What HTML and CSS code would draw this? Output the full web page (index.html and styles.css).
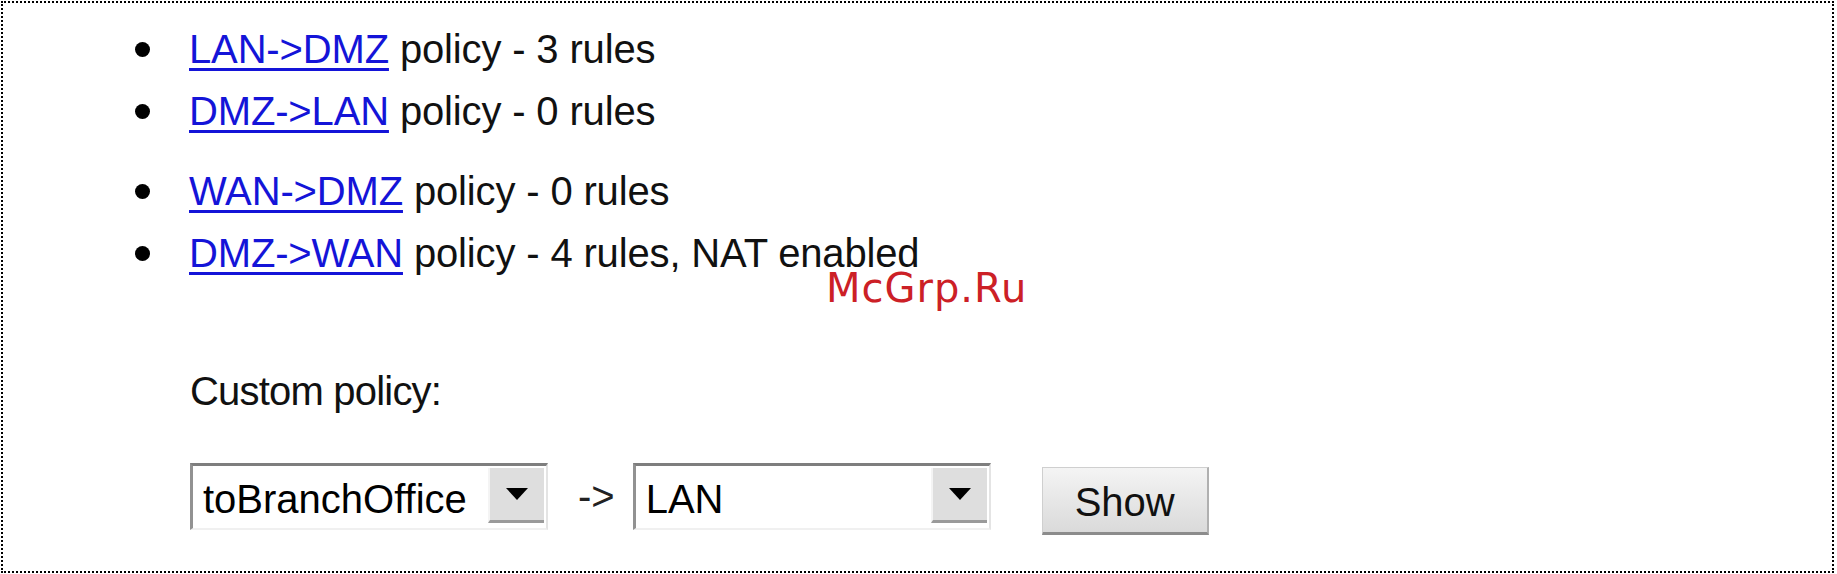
FILE: index.html
```html
<!DOCTYPE html>
<html>
<head>
<meta charset="utf-8">
<link rel="stylesheet" href="styles.css">
</head>
<body>
<div class="frame">
  <ul class="policies">
    <li class="item"><span class="dot"></span><a href="#" class="link">LAN-&gt;DMZ</a>&nbsp;policy - 3 rules</li>
    <li class="item"><span class="dot"></span><a href="#" class="link">DMZ-&gt;LAN</a>&nbsp;policy - 0 rules</li>
    <li class="item item-gap"><span class="dot"></span><a href="#" class="link">WAN-&gt;DMZ</a>&nbsp;policy - 0 rules</li>
    <li class="item"><span class="dot"></span><a href="#" class="link">DMZ-&gt;WAN</a>&nbsp;policy - 4 rules, NAT enabled</li>
  </ul>
  <div class="custom">
    <p class="custom-label">Custom policy:</p>
    <div class="controls">
      <div class="combo">
        <span class="combo-text">toBranchOffice</span>
        <span class="combo-btn"><span class="tri"></span></span>
      </div>
      <span class="arrow">-&gt;</span>
      <div class="combo">
        <span class="combo-text">LAN</span>
        <span class="combo-btn"><span class="tri"></span></span>
      </div>
      <button class="show">Show</button>
    </div>
  </div>
  <div class="watermark">McGrp.Ru</div>
</div>
</body>
</html>
```
FILE: styles.css
```css
html, body {
  margin: 0;
  padding: 0;
  background: #fff;
}
body {
  padding: 1px;
  font-family: "Liberation Sans", Arial, sans-serif;
  font-size: 40px;
  color: #111;
}
.frame {
  position: relative;
  box-sizing: border-box;
  width: 1833px;
  height: 572px;
  border: 2px dotted #000;
  padding: 15px 0 0 0;
}
.policies {
  list-style: none;
  margin: 0;
  padding: 0 0 0 132px;
}
.item {
  display: flex;
  align-items: center;
  height: 62px;
  line-height: 62px;
  white-space: pre;
  letter-spacing: -0.15px;
}
.item-gap {
  margin-top: 18px;
}
.dot {
  width: 15px;
  height: 15px;
  border-radius: 50%;
  background: #000;
  margin-right: 39px;
  flex: none;
}
.link {
  color: #1414d8;
  text-decoration: underline;
  text-decoration-thickness: 3px;
  text-underline-offset: 5px;
}
.custom {
  padding-left: 187px;
  margin-top: 76px;
}
.custom-label {
  margin: 0;
  height: 62px;
  line-height: 62px;
  letter-spacing: -0.8px;
}
.controls {
  display: flex;
  align-items: center;
  margin-top: 36px;
}
.combo {
  box-sizing: border-box;
  display: flex;
  width: 358px;
  height: 67px;
  background: #fff;
  border-top: 3px solid #7e7e7e;
  border-left: 3px solid #929292;
  border-right: 2px solid #e4e4e4;
  border-bottom: 2px solid #f0f0f0;
}
.combo-text {
  flex: 1;
  padding-left: 10px;
  padding-top: 4px;
  line-height: 58px;
  color: #000;
}
.combo-btn {
  box-sizing: border-box;
  width: 56px;
  margin: 2px 2px 5px 0;
  background: #dedede;
  border-left: 2px solid #f4f4f4;
  border-bottom: 3px solid #9a9a9a;
  display: flex;
  align-items: center;
  justify-content: center;
}
.tri {
  width: 0;
  height: 0;
  border-left: 11px solid transparent;
  border-right: 11px solid transparent;
  border-top: 12px solid #000;
}
.arrow {
  margin: 0 18px 0 30px;
  color: #222;
}
.show {
  box-sizing: border-box;
  margin-left: 51px;
  width: 167px;
  height: 68px;
  font: inherit;
  color: #111;
  background: linear-gradient(#f4f4f4, #dadada);
  border: 1px solid #cfcfcf;
  border-right: 2px solid #b0b0b0;
  border-bottom: 3px solid #8c8c8c;
  padding: 4px 0 0 0;
  margin-top: 9px;
}
.watermark {
  position: absolute;
  left: 823px;
  top: 262px;
  color: #cc2026;
  font-family: "DejaVu Sans", sans-serif;
  font-size: 40px;
  letter-spacing: 1px;
}
```
